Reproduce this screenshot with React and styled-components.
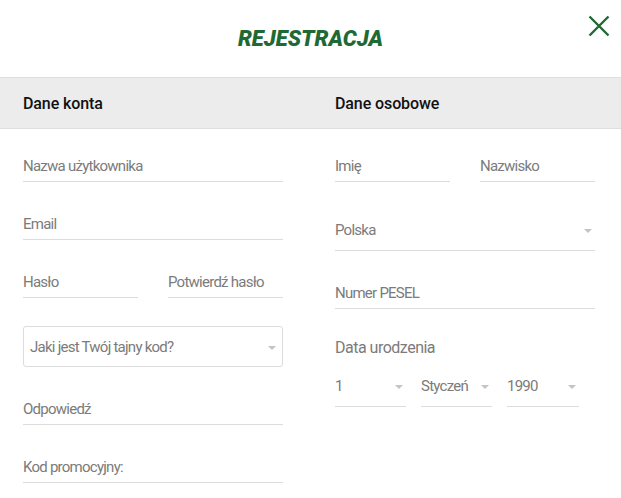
import React from "react";
import styled, { createGlobalStyle } from "styled-components";

const Global = createGlobalStyle`
  html, body { margin: 0; padding: 0; background: #fff; }
  body { font-family: Roboto, "Liberation Sans", sans-serif; }
  * { box-sizing: border-box; }
`;

const Page = styled.div`
  width: 621px;
  height: 498px;
  overflow: hidden;
  background: #fff;
`;

const Top = styled.header`
  position: relative;
  height: 77px;
  display: flex;
  align-items: center;
  justify-content: center;
`;

const Title = styled.h1`
  margin: 0;
  font-family: Roboto, sans-serif;
  font-style: italic;
  font-weight: 900;
  font-size: 22px;
  color: #1e6a35;
`;

const Close = styled.button`
  position: absolute;
  right: 10px;
  top: 14px;
  width: 24px;
  height: 24px;
  padding: 0;
  border: 0;
  background: none;
  display: flex;
`;

const Bar = styled.div`
  display: grid;
  grid-template-columns: 260px 260px;
  column-gap: 52px;
  padding: 0 26px 0 23px;
  height: 52px;
  align-items: center;
  background: #ececec;
  border-top: 1px solid #dedede;
  border-bottom: 1px solid #dedede;
`;

const BarTitle = styled.div`
  font-size: 16px;
  font-weight: 500;
  color: #111;
  letter-spacing: -0.1px;
`;

const Body = styled.div`
  display: grid;
  grid-template-columns: 260px 260px;
  column-gap: 52px;
  padding: 23px 26px 0 23px;
  align-items: start;
`;

const Col = styled.div`
  display: flex;
  flex-direction: column;
  gap: 28px;
`;

const Row = styled.div`
  display: flex;
  gap: ${(p) => p.$gap || 30}px;
  & > * { flex: 1 1 0; }
`;

const Field = styled.div`
  height: 30px;
  display: flex;
  align-items: center;
  border-bottom: 1px solid #dcdcdc;
  font-size: 15px;
  letter-spacing: -0.75px;
  color: #7b7b7b;
  padding-bottom: 1px;
`;

const Select = styled.div`
  height: 41px;
  width: ${(p) => (p.$w ? `${p.$w}px` : "auto")};
  flex: none;
  display: flex;
  align-items: center;
  justify-content: space-between;
  font-size: 15px;
  letter-spacing: -0.75px;
  color: #7b7b7b;
  padding: 0 ${(p) => (p.$boxed ? 6 : 3)}px 0 ${(p) => (p.$boxed ? 6 : 0)}px;
  border-bottom: 1px solid #dcdcdc;
  ${(p) => p.$boxed && `border: 1px solid #dcdcdc; border-radius: 3px;`}
`;

const Caret = styled.span`
  width: 0;
  height: 0;
  border-left: 4px solid transparent;
  border-right: 4px solid transparent;
  border-top: 4px solid #c4c4c4;
  margin-top: 2px;
`;

const Label = styled.div`
  font-size: 16px;
  letter-spacing: -0.5px;
  color: #7b7b7b;
  height: 22px;
  line-height: 22px;
  margin-bottom: -21px;
`;

const DateRow = styled.div`
  display: flex;
  gap: 15px;
`;

export default function App() {
  return (
    <Page>
      <Global />
      <Top>
        <Title>REJESTRACJA</Title>
        <Close aria-label="close">
          <svg width="24" height="24" viewBox="0 0 24 24">
            <path d="M2.5 2.5 L21.5 21.5 M21.5 2.5 L2.5 21.5" stroke="#1e6a35" strokeWidth="2.4" fill="none" />
          </svg>
        </Close>
      </Top>
      <Bar>
        <BarTitle>Dane konta</BarTitle>
        <BarTitle>Dane osobowe</BarTitle>
      </Bar>
      <Body>
        <Col>
          <Field>Nazwa użytkownika</Field>
          <Field>Email</Field>
          <Row>
            <Field>Hasło</Field>
            <Field>Potwierdź hasło</Field>
          </Row>
          <Select $boxed>
            <span>Jaki jest Twój tajny kod?</span>
            <Caret />
          </Select>
          <Field>Odpowiedź</Field>
          <Field>Kod promocyjny:</Field>
        </Col>
        <Col>
          <Row>
            <Field>Imię</Field>
            <Field>Nazwisko</Field>
          </Row>
          <Select>
            <span>Polska</span>
            <Caret />
          </Select>
          <Field>Numer PESEL</Field>
          <Label>Data urodzenia</Label>
          <DateRow>
            <Select $w={71}>
              <span>1</span>
              <Caret />
            </Select>
            <Select $w={71}>
              <span>Styczeń</span>
              <Caret />
            </Select>
            <Select $w={72}>
              <span>1990</span>
              <Caret />
            </Select>
          </DateRow>
        </Col>
      </Body>
    </Page>
  );
}
